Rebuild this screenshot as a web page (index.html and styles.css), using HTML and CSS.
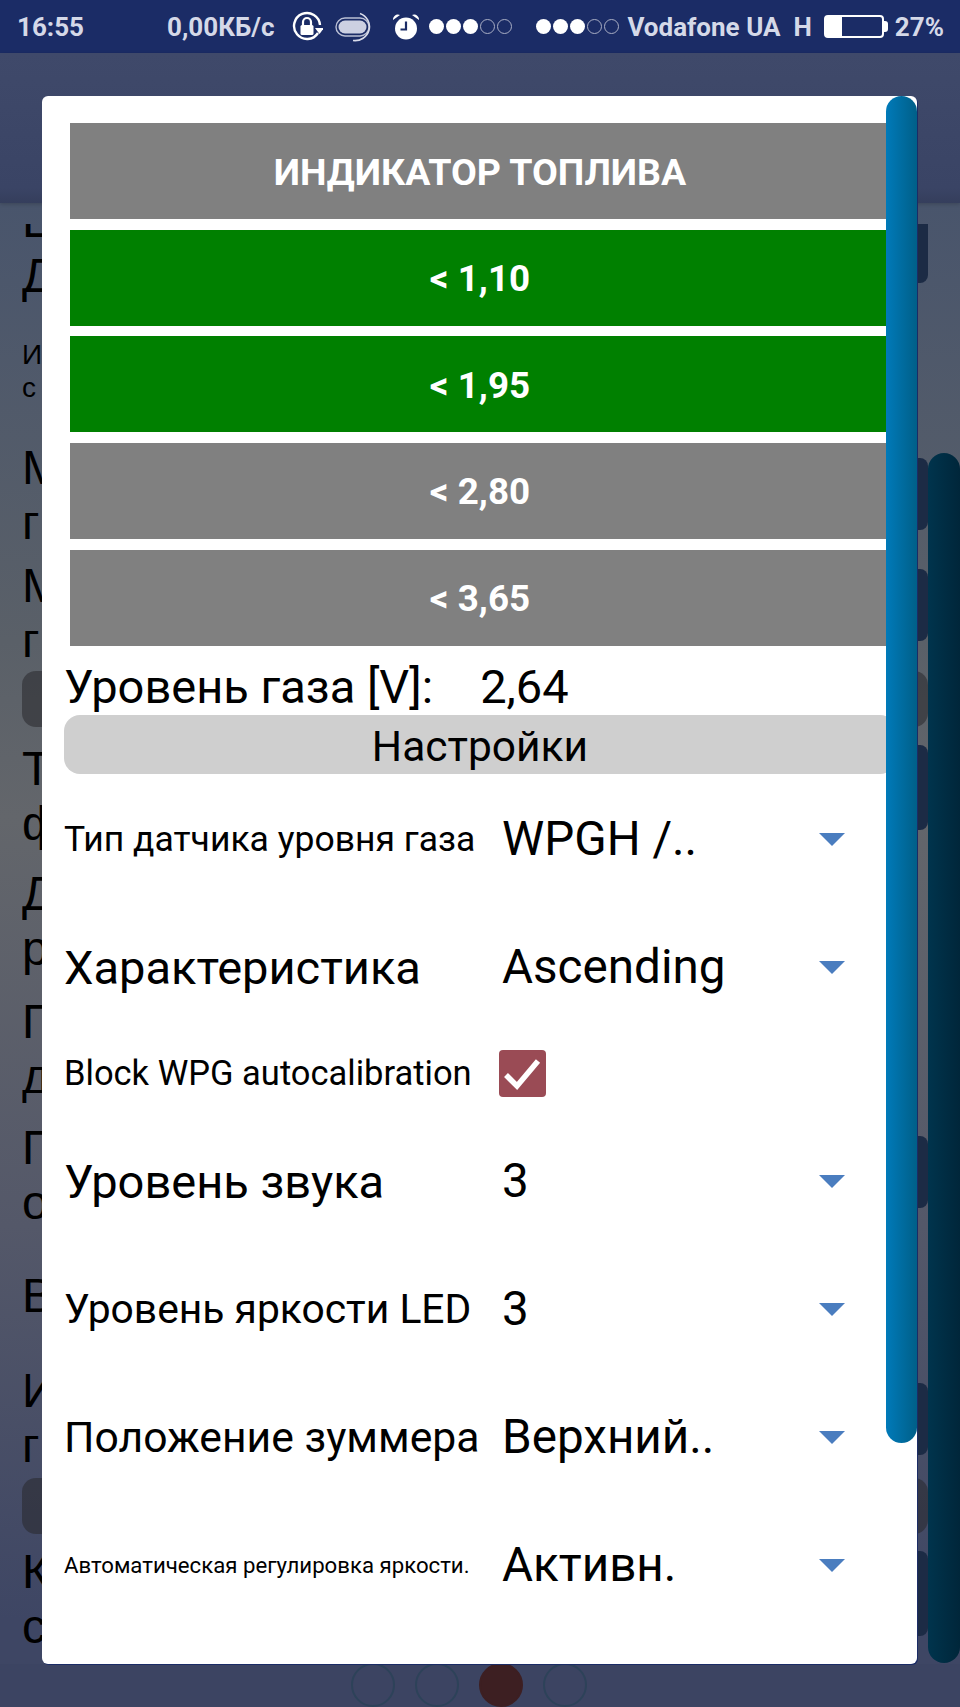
FILE: index.html
```html
<!DOCTYPE html>
<html lang="ru">
  <head>
    <meta charset="utf-8">
    <title>Индикатор топлива</title>
    <link rel="stylesheet" href="styles.css">
  </head>
  <body>
    <!-- status bar -->
    <div class="status-bar">
      <span class="status-time">16:55</span>
      <span class="status-speed">0,00КБ/с</span>
      <svg class="icon-lock" width="32" height="32" viewBox="0 0 32 32">
        <path d="M27 22A13 13 0 1 1 29 14" fill="none" stroke="#fff" stroke-width="2.4"/>
        <path d="M24 17h9l-4.5 6z" fill="#fff"/>
        <rect x="9.5" y="14" width="13" height="10" rx="1.5" fill="#fff"/>
        <path d="M12 14v-3a4 4 0 0 1 8 0v3" fill="none" stroke="#fff" stroke-width="2.2"/>
      </svg>
      <svg class="icon-pill" width="42" height="30" viewBox="0 0 42 30">
        <rect x="1" y="6" width="33" height="18" rx="9" fill="none" stroke="#b9bed4" stroke-width="1.4"/>
        <rect x="3.5" y="8.500" width="28" height="13" rx="6.500" fill="#ccd0e2"/>
        <path d="M25 1.500A14.500 14 0 0 1 18 28.500" fill="none" stroke="#d9dcea" stroke-width="1.6"/>
      </svg>
      <svg class="icon-alarm" width="28" height="30" viewBox="0 0 28 30">
        <circle cx="14" cy="16.500" r="11" fill="#fff"/>
        <path d="M1 8a5 5 0 0 1 7-5zM27 8a5 5 0 0 0-7-5z" fill="#fff"/>
        <path d="M14 9.500v8h-5.500" fill="none" stroke="#1b2c66" stroke-width="2.200"/>
      </svg>
      <span class="signal signal-one"><i></i><i></i><i></i><b></b><b></b></span>
      <span class="signal signal-two"><i></i><i></i><i></i><b></b><b></b></span>
      <span class="status-carrier">Vodafone UA</span>
      <span class="status-net">H</span>
      <span class="battery"><span class="battery-level"></span></span>
      <span class="status-percent">27%</span>
    </div>

    <div class="app-header"></div>

    <!-- page behind the dialog -->
    <div class="page">
      <div class="page-list">
        <div class="bg-row row-a"><p>Ц<br>Д</p><span class="bg-btn"></span></div>
        <div class="bg-row row-b"><p class="bg-small">И<br>с</p></div>
        <div class="bg-row row-c"><p>М<br>г</p><span class="bg-btn"></span></div>
        <div class="bg-row row-d"><p>М<br>г</p><span class="bg-btn"></span></div>
        <div class="bg-bar bar-one"></div>
        <div class="bg-row row-e"><p>Т<br>ф</p><span class="bg-btn bg-btn-big"></span></div>
        <div class="bg-row row-f"><p>Д<br>р</p></div>
        <div class="bg-row row-g"><p>П<br>д</p></div>
        <div class="bg-row row-h"><p>П<br>о</p><span class="bg-btn"></span></div>
        <div class="bg-row row-i"><p>В</p></div>
        <div class="bg-row row-j"><p>И<br>г</p><span class="bg-btn"></span></div>
        <div class="bg-bar bar-two"></div>
        <div class="bg-row row-k"><p>К<br>с</p><span class="bg-btn bg-btn-big"></span></div>
      </div>
    </div>

    <div class="pager">
      <span class="pager-dot"></span>
      <span class="pager-dot"></span>
      <span class="pager-dot pager-dot-active"></span>
      <span class="pager-dot"></span>
    </div>

    <div class="page-scroll"></div>

    <!-- dialog -->
    <div class="dialog">
      <div class="scroll-thumb"></div>

      <div class="indicator indicator-title">ИНДИКАТОР ТОПЛИВА</div>
      <div class="indicator indicator-on">&lt; 1,10</div>
      <div class="indicator indicator-on">&lt; 1,95</div>
      <div class="indicator">&lt; 2,80</div>
      <div class="indicator">&lt; 3,65</div>

      <div class="gas-level">
        <span class="gas-label">Уровень газа [V]:</span>
        <span class="gas-value">2,64</span>
      </div>
      <div class="section-title">Настройки</div>

      <div class="setting">
        <span class="setting-label label-sensor">Тип датчика уровня газа</span>
        <span class="setting-value">WPGH /..</span>
        <span class="arrow"></span>
      </div>
      <div class="setting">
        <span class="setting-label label-curve">Характеристика</span>
        <span class="setting-value">Ascending</span>
        <span class="arrow"></span>
      </div>
      <div class="setting setting-check">
        <span class="setting-label label-block">Block WPG autocalibration</span>
        <span class="checkbox">
          <svg width="47" height="47" viewBox="0 0 47 47">
            <path d="M7 25l11 11 21-25" fill="none" stroke="#fff" stroke-width="5.500"/>
          </svg>
        </span>
      </div>
      <div class="setting">
        <span class="setting-label label-sound">Уровень звука</span>
        <span class="setting-value">3</span>
        <span class="arrow"></span>
      </div>
      <div class="setting">
        <span class="setting-label label-led">Уровень яркости LED</span>
        <span class="setting-value">3</span>
        <span class="arrow"></span>
      </div>
      <div class="setting">
        <span class="setting-label label-buzzer">Положение зуммера</span>
        <span class="setting-value">Верхний..</span>
        <span class="arrow"></span>
      </div>
      <div class="setting">
        <span class="setting-label label-auto">Автоматическая регулировка яркости.</span>
        <span class="setting-value">Активн.</span>
        <span class="arrow"></span>
      </div>
    </div>
  </body>
</html>
```

FILE: styles.css
```css
* {
  box-sizing: border-box;
}

body {
  position: relative;
  width: 960px;
  height: 1707px;
  margin: 0;
  overflow: hidden;
  font-family: Roboto, sans-serif;
  background-color: #3c4462;
}

/* status bar */
.status-bar {
  display: flex;
  align-items: center;
  height: 53px;
  padding-left: 17px;
  font-size: 26px;
  font-weight: 700;
  color: #d5d9e8;
  background-color: #1b2c66;
}

.status-speed {
  margin-left: 83px;
}

.icon-lock {
  margin-left: 17px;
}

.icon-pill {
  margin-left: 12px;
}

.icon-alarm {
  margin-left: 15px;
}

.signal {
  display: flex;
  gap: 2px;
}

.signal i,
.signal b {
  width: 15px;
  height: 15px;
  border-radius: 50%;
}

.signal i {
  background-color: #fff;
}

.signal b {
  border: 1.5px solid #a9aec4;
}

.signal-one {
  margin-left: 9px;
}

.signal-two {
  margin-left: 24px;
}

.status-carrier {
  margin-left: 8px;
}

.status-net {
  margin-left: 13px;
}

.battery {
  position: relative;
  width: 60px;
  height: 23px;
  margin-left: 12px;
  border: 2px solid #fff;
  border-radius: 4px;
}

.battery::after {
  content: "";
  position: absolute;
  top: 4px;
  right: -6px;
  width: 4px;
  height: 11px;
  background-color: #fff;
  border-radius: 0 3px 3px 0;
}

.battery-level {
  display: block;
  width: 16px;
  height: 19px;
  background-color: #fff;
}

.status-percent {
  margin-left: 11px;
}

.app-header {
  position: relative;
  z-index: 1;
  height: 150px;
  background: linear-gradient(#3f496a, #3a4465 90%, #353e5c);
  box-shadow: 0 1px 4px rgba(0, 0, 0, 0.2);
}

/* page behind the dialog */
.page {
  height: 1461px;
  padding: 21px 0 0 22px;
  color: #000;
  font-family: "Liberation Sans", sans-serif;
  background: linear-gradient(#49556c, #5a6068 30%, #63666b 42%, #545869 70%, #3e4664 97%);
}

.page-list {
  height: 1440px;
  overflow: hidden;
}

.bg-row {
  display: flex;
  justify-content: space-between;
  align-items: flex-start;
}

.bg-row p {
  margin: 0;
  font-size: 48px;
  line-height: 55px;
}

.bg-row .bg-small {
  font-size: 28px;
  line-height: 33px;
}

.bg-btn {
  width: 150px;
  height: 72px;
  background-color: #1c2b45;
  border-radius: 0 8px 8px 0;
  margin-right: 32px;
}

.bg-btn-big {
  height: 85px;
}

.bg-bar {
  height: 56px;
  margin-right: 32px;
  background-color: rgba(40, 40, 44, 0.55);
  border-radius: 14px;
}

.row-a {
  margin-top: -31px;
}

.row-a .bg-btn {
  height: 59px;
  margin-top: 31px;
  border-radius: 0 0 8px 0;
}

.row-b {
  margin-top: 35px;
}

.row-c {
  margin-top: 36px;
}

.row-c .bg-btn {
  margin-top: 18px;
}

.row-d {
  margin-top: 8px;
}

.row-d .bg-btn {
  margin-top: 11px;
}

.bar-one {
  margin-top: 3px;
}

.row-e {
  margin-top: 14px;
}

.row-e .bg-btn {
  margin-top: 4px;
}

.row-f {
  margin-top: 15px;
}

.row-g {
  margin-top: 18px;
}

.row-h {
  margin-top: 16px;
}

.row-h .bg-btn {
  margin-top: 16px;
}

.row-i {
  margin-top: 38px;
}

.row-j {
  margin-top: 40px;
}

.row-j .bg-btn {
  margin-top: 20px;
}

.bar-two {
  margin-top: 5px;
}

.row-k {
  margin-top: 10px;
}

.row-k .bg-btn {
  margin-top: 7px;
}

.pager {
  position: absolute;
  top: 1663px;
  left: 351px;
  display: flex;
  gap: 20px;
}

.pager-dot {
  width: 44px;
  height: 44px;
  border: 2px solid #2d4259;
  border-radius: 50%;
}

.pager-dot-active {
  background-color: #3d1f22;
  border-color: #3d1f22;
}

.page-scroll {
  position: absolute;
  top: 453px;
  left: 928px;
  width: 32px;
  height: 1210px;
  background: linear-gradient(90deg, #00344d, #00263a);
  border-radius: 16px;
}

/* dialog */
.dialog {
  position: absolute;
  z-index: 2;
  top: 96px;
  left: 42px;
  width: 875px;
  height: 1568px;
  padding-top: 27px;
  overflow: hidden;
  background-color: #fff;
  border-radius: 6px;
  box-shadow: 1px 1px 0 #1b2c66;
}

.scroll-thumb {
  position: absolute;
  z-index: 1;
  top: 0;
  right: 0;
  width: 31px;
  height: 1347px;
  background: linear-gradient(90deg, #007ab9, #005f88);
  border-radius: 16px;
}

.indicator {
  display: flex;
  align-items: center;
  justify-content: center;
  width: 820px;
  height: 96px;
  margin: 0 0 10.670px 28px;
  padding-top: 2px;
  font-size: 36.800px;
  font-weight: 700;
  color: #fff;
  background-color: #808080;
}

.indicator-title {
  font-size: 37.500px;
}

.indicator-on {
  background-color: #008000;
}

.gas-level {
  display: flex;
  align-items: center;
  height: 69px;
  margin-top: -10px;
  padding: 12px 0 0 22px;
  font-size: 47px;
  color: #000;
}

.gas-value {
  margin-left: 47px;
}

.section-title {
  width: 832px;
  height: 59px;
  margin-left: 22px;
  font-size: 42.500px;
  line-height: 63px;
  text-align: center;
  background-color: #cfcfcf;
  border-radius: 16px;
}

.setting {
  display: flex;
  align-items: center;
  height: 128px;
  padding-left: 22px;
  color: #000;
}

.section-title + .setting {
  margin-top: 1px;
}

.setting-check {
  height: 84px;
  margin-bottom: 2px;
}

.setting-label {
  width: 438px;
  flex-shrink: 0;
  white-space: nowrap;
}

.setting-value {
  flex: 1;
  font-size: 47.600px;
}

.label-sensor {
  font-size: 35.500px;
}

.label-block {
  font-size: 34.500px;
}

.label-curve,
.label-sound {
  font-size: 47px;
}

.label-led {
  font-size: 40.800px;
}

.label-buzzer {
  font-size: 42.700px;
}

.label-auto {
  font-size: 22.200px;
}

.arrow {
  width: 0;
  height: 0;
  margin-right: 72px;
  border-top: 13px solid #4a7dbf;
  border-left: 13px solid transparent;
  border-right: 13px solid transparent;
}

.checkbox {
  display: block;
  width: 47px;
  height: 47px;
  margin-left: -3px;
  background-color: #9a4b55;
  border-radius: 4px;
}

.checkbox svg {
  display: block;
}
```
